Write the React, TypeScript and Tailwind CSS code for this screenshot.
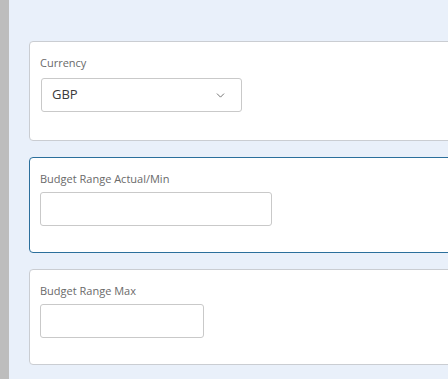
import { ChevronDown } from "lucide-react";

const font = { fontFamily: '"Open Sans", "Liberation Sans", sans-serif' };

function Card({ label, active, children, pt = "pt-[14px]", gap = "mt-[6px]", pb = "pb-[26px]" }: {
  label: string;
  active?: boolean;
  children: React.ReactNode;
  pt?: string;
  gap?: string;
  pb?: string;
}) {
  return (
    <div
      className={`rounded-[4px] border bg-white pl-[10px] ${pt} ${pb} ${
        active ? "border-[#2b6f9c]" : "border-[#cacdd2]"
      }`}
    >
      <div className="text-[11px] leading-[14px] text-[#6a6a6a]">{label}</div>
      <div className={gap}>{children}</div>
    </div>
  );
}

export default function App() {
  return (
    <div className="flex h-[379px] w-[448px] overflow-hidden" style={font}>
      <div className="w-[9px] shrink-0 bg-[#bdbdbd]" />
      <div className="flex-1 bg-[#e9f0fa] pl-[20px] pt-[41px]">
        <div className="flex w-[480px] flex-col gap-[16px]">
          <Card label="Currency" gap="mt-[8px]" pb="pb-[28px]">
            <div className="ml-[1px] flex h-[34px] w-[201px] items-center justify-between rounded-[3px] border border-[#c9c9c9] bg-white pl-[10px] pr-[14px]">
              <span className="text-[13px] text-[#3a3a3a]">GBP</span>
              <ChevronDown size={13} strokeWidth={1.5} className="text-[#555]" />
            </div>
          </Card>
          <Card label="Budget Range Actual/Min" active>
            <div className="h-[34px] w-[232px] rounded-[3px] border border-[#c9c9c9] bg-white" />
          </Card>
          <Card label="Budget Range Max">
            <div className="h-[34px] w-[164px] rounded-[3px] border border-[#c9c9c9] bg-white" />
          </Card>
        </div>
      </div>
    </div>
  );
}
